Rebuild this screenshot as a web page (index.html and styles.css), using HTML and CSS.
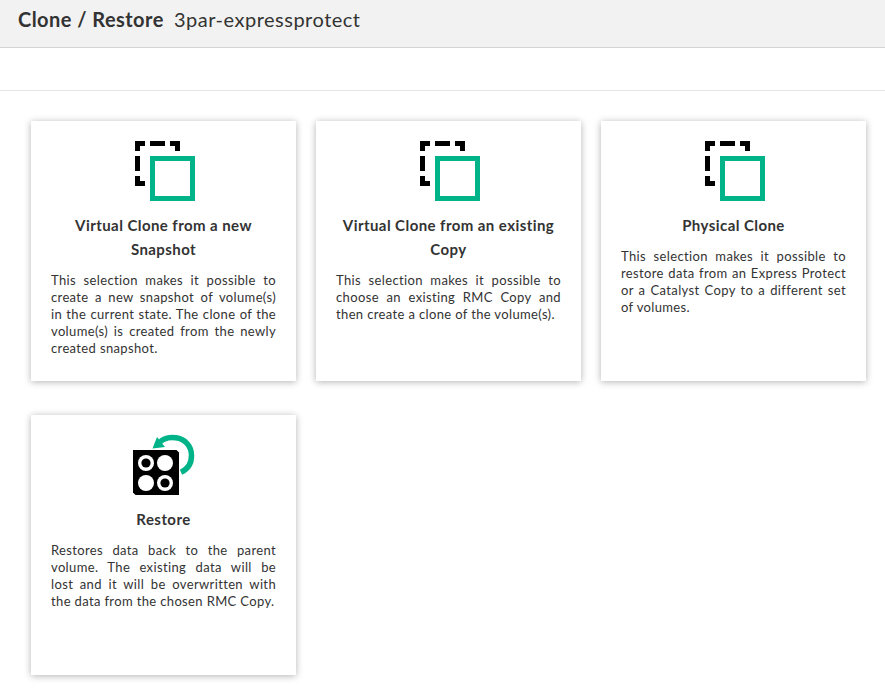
FILE: index.html
```html
<!DOCTYPE html>
<html lang="en">
<head>
<meta charset="utf-8">
<title>Clone / Restore</title>
<link rel="stylesheet" href="styles.css">
</head>
<body>
<svg width="0" height="0" class="defs" aria-hidden="true">
  <symbol id="clone" viewBox="0 0 62 62">
    <path fill="#000" d="M1 1h10v5H6v5H1zM16 1h15v5H16zM36 1h10v10h-5V6h-5zM1 16h5v15H1zM1 36h5v5h5v5H1z"/>
    <path fill="none" stroke="#01b388" stroke-width="5" d="M18.500 18.500h40v40h-40z"/>
  </symbol>
</svg>
<header class="page-header">
  <h1 class="page-title">Clone / Restore</h1>
  <span class="page-subject">3par-expressprotect</span>
</header>
<div class="toolbar"></div>
<main class="cards">
  <section class="card">
    <svg class="icon"><use href="#clone"/></svg>
    <h2 class="card-title">Virtual Clone from a new<br>Snapshot</h2>
    <p class="card-text"><span>This selection makes it possible to</span> <span>create a new snapshot of volume(s)</span> <span>in the current state. The clone of the</span> <span>volume(s) is created from the newly</span> <span class="last">created snapshot.</span></p>
  </section>
  <section class="card">
    <svg class="icon"><use href="#clone"/></svg>
    <h2 class="card-title">Virtual Clone from an existing<br>Copy</h2>
    <p class="card-text"><span>This selection makes it possible to</span> <span>choose an existing RMC Copy and</span> <span class="last">then create a clone of the volume(s).</span></p>
  </section>
  <section class="card">
    <svg class="icon"><use href="#clone"/></svg>
    <h2 class="card-title">Physical Clone</h2>
    <p class="card-text"><span>This selection makes it possible to</span> <span>restore data from an Express Protect</span> <span>or a Catalyst Copy to a different set</span> <span class="last">of volumes.</span></p>
  </section>
  <section class="card">
    <svg class="icon" viewBox="1 -1 62 62">
      <path fill="#000" d="M0 15H43.500L46 17.500V60H2.500L0 57.500z"/>
      <g fill="#fff"><circle cx="13" cy="28" r="8"/><circle cx="32" cy="28" r="8"/><circle cx="13" cy="48" r="8"/><circle cx="32" cy="48" r="8"/></g>
      <g fill="#000"><circle cx="13" cy="28" r="4.600"/><circle cx="32" cy="48" r="4.600"/></g>
      <path fill="none" stroke="#01b388" stroke-width="5.500" d="M26 8C30 3.200 36 1.800 43 2.800C52 4 58.300 11 58.500 20C58.700 28 55 34 48 37.200"/>
      <path fill="#01b388" d="M24 2L32 12L19.500 13.500z"/>
    </svg>
    <h2 class="card-title">Restore</h2>
    <p class="card-text"><span>Restores data back to the parent</span> <span>volume. The existing data will be</span> <span>lost and it will be overwritten with</span> <span class="last">the data from the chosen RMC Copy.</span></p>
  </section>
</main>
</body>
</html>
```

FILE: styles.css
```css
* { box-sizing: border-box; }
body {
  margin: 0;
  min-height: 689px;
  background: #fff;
  color: #333;
  font-family: Lato, "Liberation Sans", sans-serif;
}
.defs { position: absolute; }
.page-header {
  display: flex;
  align-items: baseline;
  height: 48px;
  padding: 6px 18px 0;
  background: #f2f2f2;
  border-bottom: 1px solid #d4d4d4;
}
.page-title {
  margin: 0;
  width: 156px;
  font-size: 20px;
  font-weight: 700;
  line-height: 26px;
  letter-spacing: 0.45px;
  white-space: nowrap;
}
.page-subject {
  font-size: 20px;
  line-height: 26px;
  letter-spacing: 0.5px;
}
.toolbar {
  height: 43px;
  border-bottom: 1px solid #e4e4e4;
}
.cards {
  display: grid;
  grid-template-columns: repeat(3, 265px);
  grid-auto-rows: 260px;
  gap: 34px 20px;
  padding: 30px 0 0 31px;
}
.card {
  padding: 19px 20px 0;
  background: #fff;
  box-shadow: 0 1px 7px rgba(0, 0, 0, 0.3);
}
.icon {
  display: block;
  width: 62px;
  height: 62px;
  margin: 0 auto;
  position: relative;
  left: 1px;
  overflow: visible;
}
.card-title {
  margin: 11px -10px;
  font-size: 15px;
  font-weight: 700;
  line-height: 24px;
  text-align: center;
  white-space: nowrap;
  letter-spacing: 0.43px;
}
.card-text {
  margin: 0;
  font-size: 13px;
  line-height: 17px;
  letter-spacing: 0.36px;
}
.card-text span {
  display: block;
  white-space: nowrap;
  text-align: justify;
  text-align-last: justify;
}
.card-text .last { text-align-last: left; }
```
